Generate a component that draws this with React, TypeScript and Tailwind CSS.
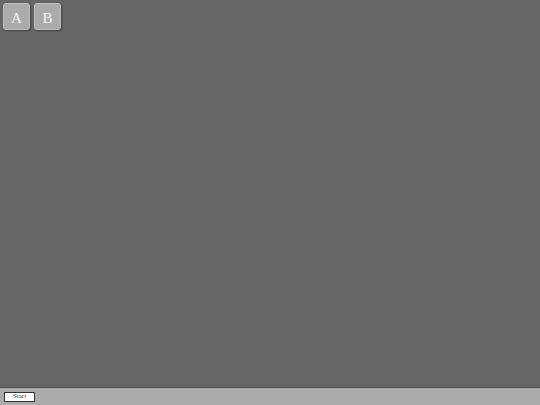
const DesktopIcon = ({ label }: { label: string }) => (
  <div className="w-[27px] h-[27px] flex items-center justify-center pt-[3px] rounded-[3px] border border-[#bdbdbd] bg-[#ababab] text-[15px] leading-none text-[#f4f4f4] shadow-[1px_1px_2px_rgba(0,0,0,0.35)] font-['Liberation_Serif',serif]">
    {label}
  </div>
)

const App = () => {
  return (
    <div className="w-[540px] h-[405px] flex flex-col bg-[#666666] font-['Liberation_Serif',serif]">
      {/* Desktop */}
      <div className="flex-1 flex items-start gap-[4px] p-[3px]">
        <DesktopIcon label="A" />
        <DesktopIcon label="B" />
      </div>

      {/* Taskbar */}
      <div className="h-[18px] flex items-center px-[4px] bg-[#ababab] border-t border-[#4a4a4a]">
        <button className="w-[31px] h-[10px] flex items-center justify-center bg-white border border-[#333] text-[7px] leading-none text-[#444]">
          Start
        </button>
      </div>
    </div>
  )
}

export default App
